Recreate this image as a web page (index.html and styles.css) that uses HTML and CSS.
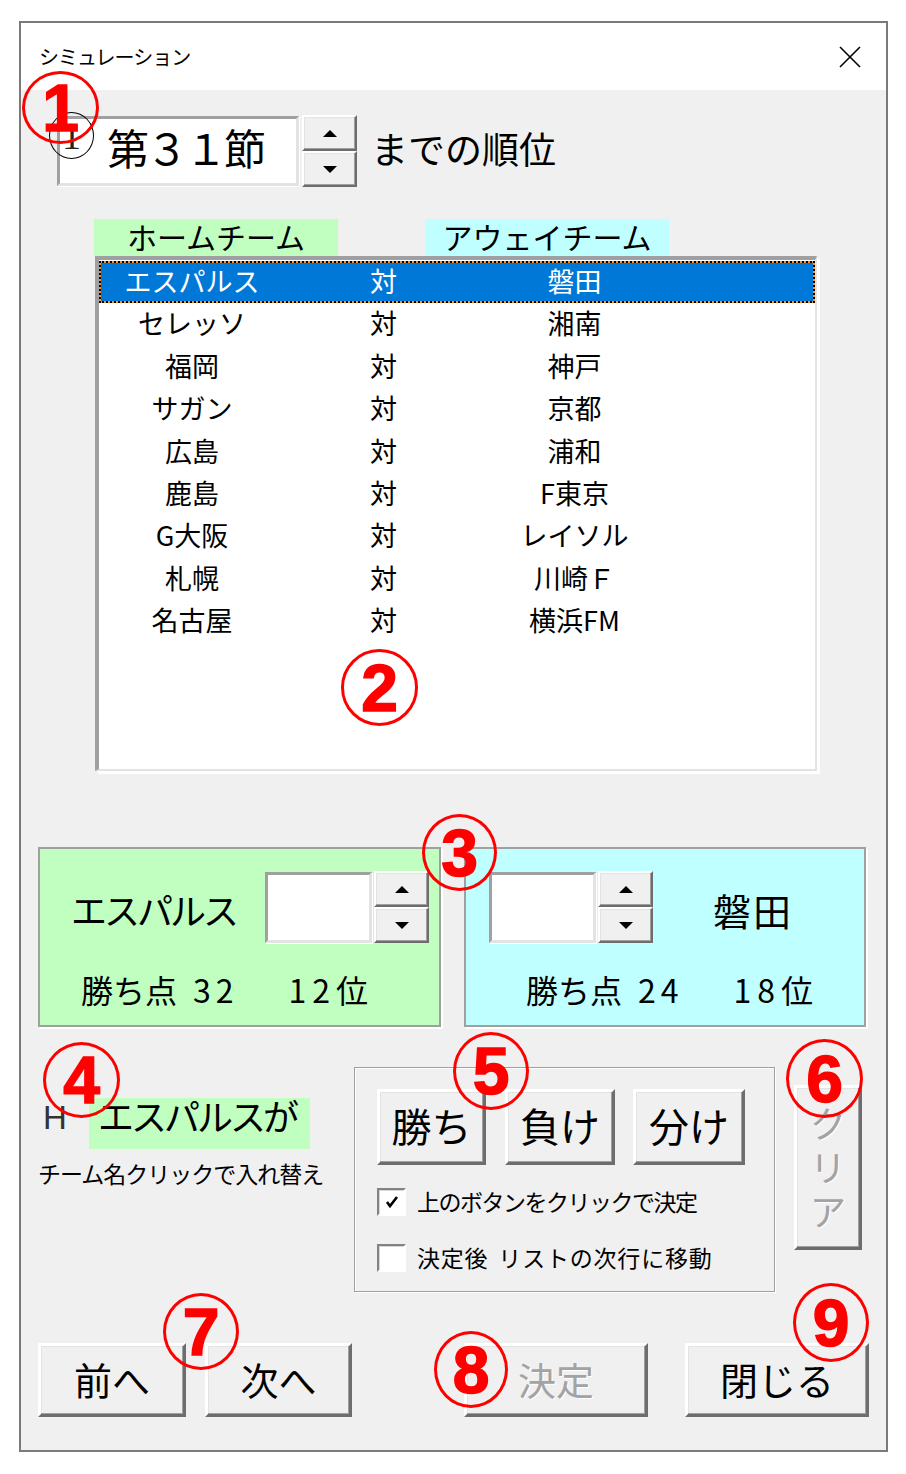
FILE: index.html
```html
<!DOCTYPE html>
<html lang="ja">

<head>
    <meta charset="UTF-8">
    <meta name="viewport" content="width=device-width, initial-scale=1.0">
    <title>シミュレーション</title>
    <link rel="stylesheet" href="styles.css">
</head>

<body>
    <div class="dialog">
        <div class="titlebar">
            <span class="title">シミュレーション</span>
            <svg class="close" width="22" height="22" viewBox="0 0 22 22">
                <path d="M1 1 L21 21 M21 1 L1 21" stroke="#000" stroke-width="1.6" fill="none" />
            </svg>
        </div>

        <div class="client">
            <!-- Round selector -->
            <div class="top-row">
                <div class="sunken num-box">第３１節</div>
                <div class="spin">
                    <div class="spin-btn"><span class="tri up"></span></div>
                    <div class="spin-btn"><span class="tri down"></span></div>
                </div>
                <span class="top-label">までの順位</span>
            </div>

            <!-- Match list -->
            <div class="list-area">
                <div class="list-heads">
                    <div class="head head-home">ホームチーム</div>
                    <div class="head head-away">アウェイチーム</div>
                </div>
                <div class="listbox">
                    <div class="row selected"><span>エスパルス</span><span>対</span><span>磐田</span></div>
                    <div class="row"><span>セレッソ</span><span>対</span><span>湘南</span></div>
                    <div class="row"><span>福岡</span><span>対</span><span>神戸</span></div>
                    <div class="row"><span>サガン</span><span>対</span><span>京都</span></div>
                    <div class="row"><span>広島</span><span>対</span><span>浦和</span></div>
                    <div class="row"><span>鹿島</span><span>対</span><span>F東京</span></div>
                    <div class="row"><span>G大阪</span><span>対</span><span>レイソル</span></div>
                    <div class="row"><span>札幌</span><span>対</span><span>川崎Ｆ</span></div>
                    <div class="row"><span>名古屋</span><span>対</span><span>横浜FM</span></div>
                </div>
            </div>

            <!-- Selected match -->
            <div class="teams">
                <div class="panel panel-home">
                    <div class="panel-top">
                        <span class="team-name">エスパルス</span>
                        <div class="sunken score-box"></div>
                        <div class="spin small">
                            <div class="spin-btn"><span class="tri up"></span></div>
                            <div class="spin-btn"><span class="tri down"></span></div>
                        </div>
                    </div>
                    <div class="points">
                        <span>勝ち点</span><span class="pts-num">32</span><span class="pts-rank">12</span><span>位</span>
                    </div>
                </div>
                <div class="panel panel-away">
                    <div class="panel-top">
                        <div class="sunken score-box"></div>
                        <div class="spin small">
                            <div class="spin-btn"><span class="tri up"></span></div>
                            <div class="spin-btn"><span class="tri down"></span></div>
                        </div>
                        <span class="team-name away-name">磐田</span>
                    </div>
                    <div class="points">
                        <span>勝ち点</span><span class="pts-num">24</span><span class="pts-rank">18</span><span>位</span>
                    </div>
                </div>
            </div>

            <!-- Result input -->
            <div class="mid-row">
                <div class="side">
                    <div class="h-row">
                        <span class="h-mark">H</span>
                        <span class="winner">エスパルスが</span>
                    </div>
                    <div class="note">チーム名クリックで入れ替え</div>
                </div>
                <div class="group">
                    <div class="result-btns">
                        <div class="btn btn-win">勝ち</div>
                        <div class="btn btn-lose">負け</div>
                        <div class="btn btn-draw">分け</div>
                    </div>
                    <div class="check-row">
                        <span class="checkbox">
                            <svg width="14" height="14" viewBox="0 0 14 14">
                                <path d="M2 7 L5 11 L12 2" stroke="#000" stroke-width="2.6" fill="none" />
                            </svg>
                        </span>
                        <span class="check-label">上のボタンをクリックで決定</span>
                    </div>
                    <div class="check-row second">
                        <span class="checkbox"></span>
                        <span class="check-label wide">決定後 リストの次行に移動</span>
                    </div>
                </div>
                <div class="btn clear-btn disabled">
                    <span>ク</span><span>リ</span><span>ア</span>
                </div>
            </div>

            <!-- Footer buttons -->
            <div class="bottom-row">
                <div class="btn btn-prev">前へ</div>
                <div class="btn btn-next">次へ</div>
                <div class="btn btn-ok disabled">決定</div>
                <div class="btn btn-close">閉じる</div>
            </div>
        </div>

        <!-- Annotation marks -->
        <div class="cursor-mark">1</div>
        <div class="mark m1">1</div>
        <div class="mark m2">2</div>
        <div class="mark m3">3</div>
        <div class="mark m4">4</div>
        <div class="mark m5">5</div>
        <div class="mark m6">6</div>
        <div class="mark m7">7</div>
        <div class="mark m8">8</div>
        <div class="mark m9">9</div>
    </div>
</body>

</html>
```

FILE: styles.css
```css
/* Global styles */

body {
    margin: 0;
    background-color: #fff;
    font-family: "Noto Sans CJK JP", sans-serif;
    color: #000;
}

.dialog {
    position: relative;
    box-sizing: border-box;
    width: 869px;
    height: 1431px;
    margin: 21px 0 0 19px;
    border: 2px solid #7a7a7a;
    background-color: #f0f0f0;
}

/* Title bar */

.titlebar {
    display: flex;
    align-items: center;
    justify-content: space-between;
    height: 67px;
    padding: 0 25px 0 18px;
    background-color: #fff;
}

.title {
    font-size: 20px;
    letter-spacing: -1px;
}

/* Shared control look */

.sunken {
    box-sizing: border-box;
    background-color: #fff;
    border: 3px solid;
    border-color: #a0a0a0 #e3e3e3 #e3e3e3 #a0a0a0;
    box-shadow: 1px 1px 0 #fff;
}

.btn {
    box-sizing: border-box;
    display: flex;
    align-items: center;
    justify-content: center;
    padding-bottom: 4px;
    border: 3px solid;
    border-color: #fff #6d6d6d #6d6d6d #fff;
    box-shadow: inset -1px -1px 0 #a0a0a0, inset 1px 1px 0 #e3e3e3;
    background-color: #f0f0f0;
    font-size: 40px;
}

.btn.disabled {
    color: #a3a3a3;
    text-shadow: 1px 1px 0 #fff;
}

.spin {
    display: flex;
    flex-direction: column;
    width: 55px;
    height: 72px;
    margin-left: 3px;
}

.spin.small {
    margin-left: 2px;
}

.spin-btn {
    flex: 1;
    display: flex;
    align-items: center;
    justify-content: center;
    border: 2px solid;
    border-color: #fff #6d6d6d #6d6d6d #fff;
    box-shadow: inset -1px -1px 0 #a0a0a0, inset 1px 1px 0 #e3e3e3;
    background-color: #f0f0f0;
}

.tri {
    width: 0;
    height: 0;
    border-left: 7px solid transparent;
    border-right: 7px solid transparent;
}

.tri.up {
    border-bottom: 7px solid #000;
}

.tri.down {
    border-top: 7px solid #000;
}

/* Round selector */

.top-row {
    display: flex;
    align-items: center;
    height: 72px;
    margin: 25px 0 0 36px;
}

.num-box {
    width: 242px;
    height: 70px;
    padding-left: 47px;
    font-size: 42px;
    line-height: 56px;
    letter-spacing: -3px;
}

.top-label {
    margin-left: 14px;
    padding-bottom: 6px;
    font-size: 37px;
}

/* Match list */

.list-area {
    margin: 32px 0 0 73px;
}

.list-heads {
    display: flex;
}

.head {
    width: 244px;
    height: 37px;
    font-size: 30px;
    line-height: 34px;
    text-align: center;
}

.head-home {
    background-color: #c0ffc0;
}

.head-away {
    margin-left: 87px;
    background-color: #c0ffff;
}

.listbox {
    box-sizing: border-box;
    width: 722px;
    height: 515px;
    margin-left: 1px;
    padding-top: 1px;
    background-color: #fff;
    border-style: solid;
    border-width: 4px 2px 2px 4px;
    border-color: #a0a0a0 #e3e3e3 #e3e3e3 #a0a0a0;
    box-shadow: 3px 3px 0 #fff;
}

.row {
    box-sizing: border-box;
    display: grid;
    grid-template-columns: 182px 201px 181px;
    height: 42.4px;
    border: 2px solid transparent;
    font-size: 27px;
    line-height: 35px;
    text-align: center;
}

.row.selected {
    border: 2px dotted #000;
    background: linear-gradient(#0078d7, #0078d7) padding-box, #f7922e border-box;
    color: #fff;
}

/* Selected match panels */

.teams {
    display: flex;
    gap: 23px;
    margin: 76px 0 0 17px;
}

.panel {
    box-sizing: border-box;
    width: 403px;
    height: 180px;
    border: 2px solid #a0a0a0;
    box-shadow: 2px 2px 0 #fff;
}

.panel-home {
    background-color: #c0ffc0;
}

.panel-away {
    width: 402px;
    background-color: #c0ffff;
}

.panel-top {
    display: flex;
    align-items: center;
    height: 72px;
    margin-top: 22px;
}

.panel-home .panel-top {
    padding-left: 31px;
}

.panel-away .panel-top {
    padding-left: 23px;
}

.team-name {
    width: 194px;
    padding-top: 4px;
    font-size: 36px;
    letter-spacing: -3px;
}

.away-name {
    width: auto;
    margin-left: 60px;
    font-size: 38px;
    letter-spacing: 2px;
}

.score-box {
    width: 107px;
    height: 71px;
}

.points {
    display: flex;
    height: 40px;
    margin-top: 28px;
    font-size: 32px;
    line-height: 36px;
}

.panel-home .points {
    padding-left: 41px;
}

.panel-away .points {
    padding-left: 60px;
}

.pts-num {
    margin-left: 16px;
    letter-spacing: 5px;
}

.pts-rank {
    margin-left: 50px;
    letter-spacing: 6px;
}

/* Result input */

.mid-row {
    display: flex;
    align-items: flex-start;
    margin: 40px 0 0 17px;
}

.side {
    width: 316px;
}

.h-row {
    display: flex;
    align-items: flex-start;
    height: 51px;
    margin-top: 31px;
}

.h-mark {
    width: 46px;
    margin-left: 5px;
    font-family: "Liberation Sans", Arial, sans-serif;
    font-size: 33px;
    line-height: 40px;
    color: #333;
}

.winner {
    box-sizing: border-box;
    width: 221px;
    height: 51px;
    padding-left: 9px;
    background-color: #c0ffc0;
    font-size: 36px;
    line-height: 34px;
    letter-spacing: -3px;
}

.note {
    margin-top: 12px;
    font-size: 23px;
    line-height: 24px;
    letter-spacing: -1px;
}

.group {
    box-sizing: border-box;
    width: 421px;
    height: 225px;
    padding: 21px 0 0 22px;
    border: 1px solid #a0a0a0;
    box-shadow: inset 1px 1px 0 #fff, 1px 1px 0 #fff;
}

.result-btns {
    display: flex;
    height: 76px;
}

.btn-win {
    width: 109px;
}

.btn-lose {
    width: 110px;
    margin-left: 19px;
}

.btn-draw {
    width: 112px;
    margin-left: 18px;
}

.check-row {
    display: flex;
    align-items: center;
    height: 28px;
    margin-top: 23px;
}

.check-row.second {
    margin-top: 28px;
}

.checkbox {
    box-sizing: border-box;
    display: flex;
    align-items: center;
    justify-content: center;
    width: 29px;
    height: 28px;
    border: 2px solid;
    border-color: #828282 #fff #fff #828282;
    box-shadow: inset 1px 1px 0 #d6d6d6;
    background-color: #fff;
}

.check-label {
    margin-left: 11px;
    padding-bottom: 2px;
    font-size: 23px;
    letter-spacing: -1.5px;
}

.check-label.wide {
    letter-spacing: 0.8px;
    word-spacing: 4px;
}

.clear-btn {
    flex-direction: column;
    width: 68px;
    height: 165px;
    margin: 18px 0 0 19px;
    font-size: 36px;
    line-height: 44px;
}

/* Footer buttons */

.bottom-row {
    display: flex;
    height: 74px;
    margin: 51px 0 0 17px;
}

.bottom-row .btn {
    height: 74px;
    font-size: 38px;
}

.btn-prev {
    width: 148px;
}

.btn-next {
    width: 147px;
    margin-left: 19px;
}

.btn-ok {
    width: 184px;
    margin-left: 112px;
}

.btn-close {
    width: 184px;
    margin-left: 37px;
}

/* Annotation marks */

.cursor-mark {
    position: absolute;
    left: 28px;
    top: 89px;
    box-sizing: border-box;
    display: flex;
    align-items: center;
    justify-content: center;
    width: 45px;
    height: 47px;
    border: 1.5px solid #000;
    border-radius: 50%;
    font-family: "Liberation Serif", serif;
    font-size: 38px;
    line-height: 1;
    color: #222;
}

.mark {
    position: absolute;
    box-sizing: border-box;
    display: flex;
    align-items: center;
    justify-content: center;
    width: 77px;
    height: 77px;
    border: 3px solid #f00;
    border-radius: 50%;
    color: #f00;
    font-family: "Liberation Sans", Arial, sans-serif;
    font-weight: bold;
    font-size: 66px;
    line-height: 1;
    -webkit-text-stroke: 1.5px #f00;
}

.m1 {
    left: 1px;
    top: 48px;
    height: 73px;
}

.m2 {
    left: 320px;
    top: 626px;
}

.m3 {
    left: 401px;
    top: 791px;
    width: 75px;
}

.m4 {
    left: 22px;
    top: 1019px;
    height: 76px;
}

.m5 {
    left: 432px;
    top: 1009px;
    width: 76px;
    height: 78px;
}

.m6 {
    left: 765px;
    top: 1016px;
    height: 79px;
}

.m7 {
    left: 142px;
    top: 1270px;
    width: 76px;
}

.m8 {
    left: 413px;
    top: 1308px;
    width: 74px;
}

.m9 {
    left: 772px;
    top: 1260px;
    width: 76px;
    height: 79px;
}
```
